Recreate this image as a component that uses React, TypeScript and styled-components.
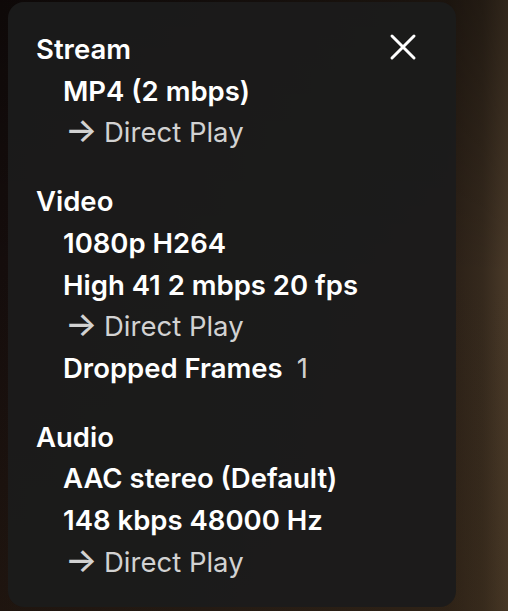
import styled, { createGlobalStyle } from 'styled-components';

const GlobalStyle = createGlobalStyle`
  html, body {
    margin: 0;
    padding: 0;
  }
  body {
    background:
      linear-gradient(180deg, rgba(0, 0, 0, 0.35) 0%, rgba(0, 0, 0, 0) 45%, rgba(60, 45, 25, 0.25) 100%),
      linear-gradient(90deg, #150d0c 0%, #1c1411 40%, #2a1f16 88%, #35291d 95%, #4a3a29 100%);
    font-family: Inter, "Noto Sans", sans-serif;
    height: 611px;
    overflow: hidden;
  }
`;

interface Line {
  text: string;
  value?: string;
  direct?: boolean;
}

interface Section {
  title: string;
  lines: Line[];
}

const sections: Section[] = [
  {
    title: 'Stream',
    lines: [{ text: 'MP4 (2 mbps)' }, { text: 'Direct Play', direct: true }],
  },
  {
    title: 'Video',
    lines: [
      { text: '1080p H264' },
      { text: 'High 41 2 mbps 20 fps' },
      { text: 'Direct Play', direct: true },
      { text: 'Dropped Frames', value: '1' },
    ],
  },
  {
    title: 'Audio',
    lines: [
      { text: 'AAC stereo (Default)' },
      { text: '148 kbps 48000 Hz' },
      { text: 'Direct Play', direct: true },
    ],
  },
];

export default function App() {
  return (
    <>
      <GlobalStyle />
      <Stage>
        <Panel>
          {sections.map((section, i) => (
            <Group key={section.title} first={i === 0}>
              <Header>
                <Title>{section.title}</Title>
                {i === 0 && (
                  <CloseButton aria-label="Close">
                    <svg width="28" height="28" viewBox="0 0 28 28" fill="none">
                      <path
                        d="M3 3 L25 25 M25 3 L3 25"
                        stroke="#fff"
                        strokeWidth="3"
                        strokeLinecap="round"
                      />
                    </svg>
                  </CloseButton>
                )}
              </Header>
              {section.lines.map(line =>
                line.direct ? (
                  <Direct key={line.text}>
                    <Arrow>→</Arrow>{line.text}
                  </Direct>
                ) : (
                  <Item key={line.text}>
                    {line.text}
                    {line.value && <Value>{line.value}</Value>}
                  </Item>
                )
              )}
            </Group>
          ))}
        </Panel>
      </Stage>
    </>
  );
}

const Stage = styled.div`
  padding: 2px 52px 0 8px;
`;

const Panel = styled.div`
  display: flex;
  flex-direction: column;
  box-sizing: border-box;
  width: 448px;
  height: 605px;
  padding: 27px 39px 0 28px;
  border-radius: 16px;
  background: rgba(27, 27, 27, 0.95);
  color: #fff;
  font-size: 27.5px;
  line-height: 41.7px;
`;

const Group = styled.div<{ first: boolean }>`
  display: flex;
  flex-direction: column;
  margin-top: ${({ first }) => (first ? '0' : '27px')};
`;

const Header = styled.div`
  display: flex;
  align-items: center;
  justify-content: space-between;
`;

const Title = styled.div`
  font-weight: 600;
`;

const CloseButton = styled.button`
  display: flex;
  padding: 0;
  margin-top: -6px;
  border: none;
  background: none;
  cursor: pointer;
`;

const Item = styled.div`
  padding-left: 27px;
  font-weight: 600;
  white-space: nowrap;
`;

const Value = styled.span`
  margin-left: 14px;
  font-weight: 400;
  color: #cfcfcf;
`;

const Direct = styled.div`
  padding-left: 29px;
  font-weight: 400;
  color: #d2d2d2;
  white-space: nowrap;
`;

const Arrow = styled.span`
  display: inline-block;
  width: 39px;
  font-size: 34px;
  font-weight: 500;
  line-height: 0;
`;
